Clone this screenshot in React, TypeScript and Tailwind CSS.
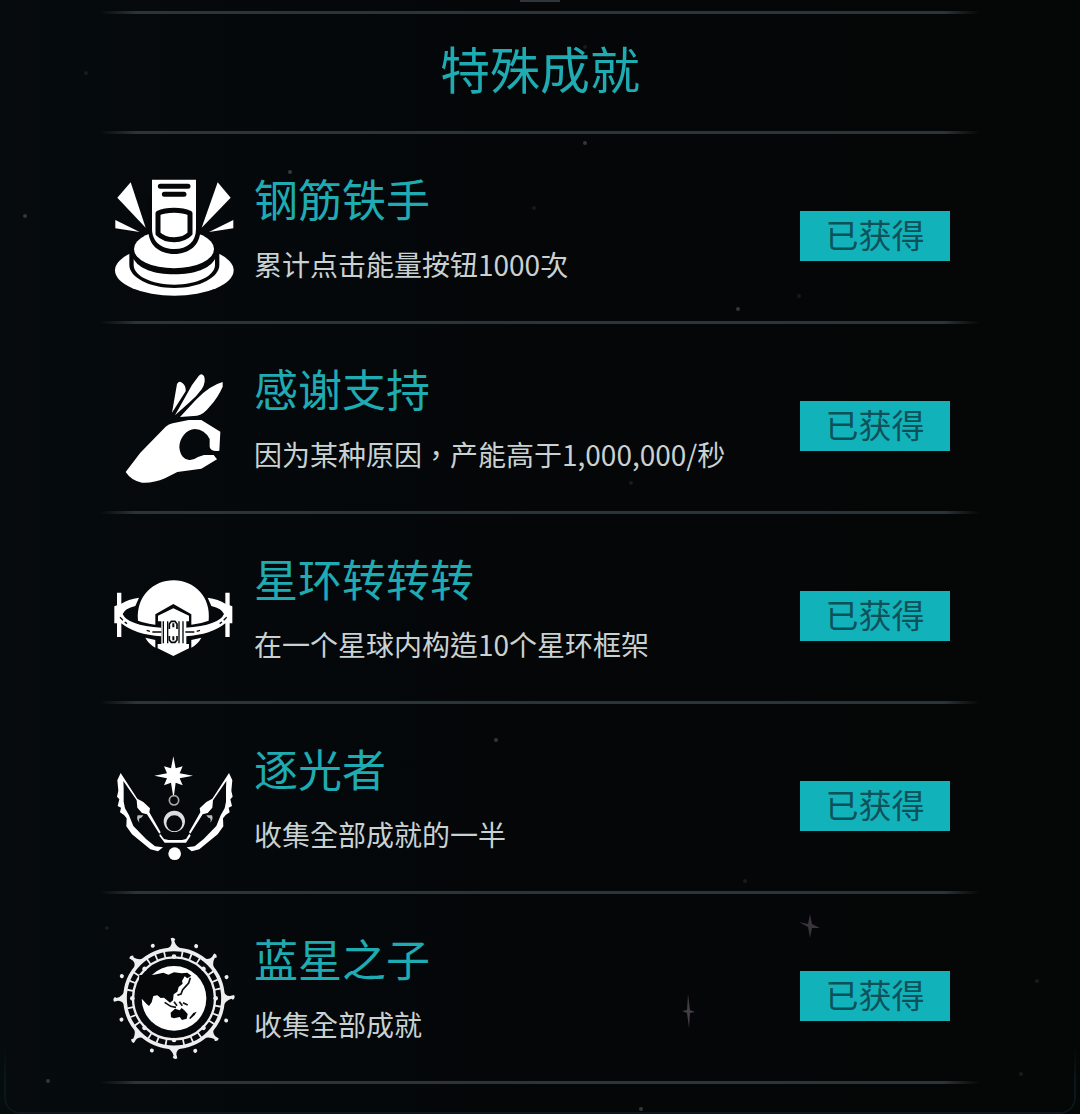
import type { ReactNode } from 'react';

const SPOKES = [0, 45, 90, 135, 180, 225, 270, 315];

function PressIcon() {
  return (
    <svg viewBox="42 33 360 360" className="size-[120px] shrink-0 overflow-visible" aria-hidden="true">
      <g fill="#fff">
        <ellipse cx="223" cy="316" rx="178" ry="76" />
        <path d="M88 240H358V300C358 336 300 369 223 369S88 336 88 300Z" fill="#050709" />
        <path d="M101 282C116 310 160 328 223 328S330 310 345 282V300C345 332 292 359 223 359S101 332 101 300Z" />
        <ellipse cx="222" cy="252" rx="120" ry="58" />
        <path d="M143 100H301V195C301 240 268 267 223 267S145 240 145 195Z" fill="#050709" />
        <path d="M156 44H288V192C288 230 262 252 223 252S156 230 156 192Z" />
        <path d="M92 52L52 98L137 188Z" />
        <path d="M353 52L392 98L305 188Z" />
        <path d="M46 165L119 201L46 190Z" />
        <path d="M400 165L327 201L400 190Z" />
      </g>
      <g fill="none" stroke="#050709" strokeLinecap="round" strokeLinejoin="round">
        <path d="M181 64H264M193 88H252" strokeWidth="15" />
        <path d="M174 145C200 133 244 133 270 145V206C248 230 198 230 174 206Z" strokeWidth="15" />
      </g>
    </svg>
  );
}

function HandIcon() {
  return (
    <svg viewBox="42 18 360 360" className="size-[120px] shrink-0 overflow-visible" aria-hidden="true">
      <g fill="#fff">
        <path d="M216 158L231 72Q238 60 248 70Q258 78 257 94Z" />
        <path d="M225 166L276 75L296 48Q304 37 312 48Q319 66 305 88Q290 110 267 128Z" />
        <path d="M240 171L288 119Q330 76 368 66V80Q354 112 330 139Q310 165 291 167Z" />
        <path d="M77 336L121 278L197 200Q206 193 218 190L266 180H304L361 215L358 272Q333 276 329 261V237Q314 208 285 207C258 208 238 235 238 262C240 286 252 299 268 300Q280 301 294 291L312 285H341L351 298L304 326L232 336L195 355Q160 370 126 368Q94 362 77 336Z" />
      </g>
    </svg>
  );
}

function StationArm() {
  return (
    <>
      <path d="M51 98H64V131Q84 118 117 113L106 138Q74 146 68 162Q82 196 184 203V229Q105 224 64 190V231H51V190H43V139L51 136Z" fill="#fff" />
      <path d="M136 233L166 240V263Q146 252 136 233Z" fill="#fff" />
      <path d="M157 216H184M140 211L150 214M60 172L69 181M74 186L81 191" fill="none" stroke="#08090c" strokeWidth="4" />
    </>
  );
}

function StationIcon() {
  return (
    <svg viewBox="42 -12 360 360" className="size-[120px] shrink-0 overflow-visible" aria-hidden="true">
      <g fill="#fff">
        <path d="M114 182C108 108 160 61 221 61S334 110 326 182Q300 192 274 194V163L220 132L166 163V194Q135 190 114 182Z" />
        <path d="M174 167L220 145L267 167V184H259V252H267V265L220 288L173 265V252H184V184H174Z" />
      </g>
      <StationArm />
      <g transform="translate(440 0) scale(-1 1)">
        <StationArm />
      </g>
      <g fill="none" stroke="#08090c">
        <path d="M190 184V250M203 184V250M237 184V250M249 184V250" strokeWidth="4" />
        <path d="M208 207V192L214 184H225L231 192V207M208 228V240L214 247H225L231 240V228" strokeWidth="5" />
        <path d="M220 190V202M220 229V241" strokeWidth="6" />
      </g>
    </svg>
  );
}

function Wing() {
  return (
    <>
      <path
        d="M62 84L52 106L55 137L51 155L58 163L53 183L63 188L60 202L72 210L80 220L79 244L96 268L151 313L174 319L189 307L165 304L138 282L100 243L87 211L75 190L71 170V130L70 108L110 166L112 188L126 204L141 208L178 266L182 262L148 202L150 190L130 171L112 161Z"
        fill="#fff"
      />
      <path d="M113 211H130L124 218Q114 218 118 233Q108 223 113 211Z" fill="#bbb" />
    </>
  );
}

function WingsIcon() {
  return (
    <svg viewBox="42 3 360 360" className="size-[120px] shrink-0 overflow-visible" aria-hidden="true">
      <Wing />
      <g transform="translate(449 0) scale(-1 1)">
        <Wing />
      </g>
      <g fill="#fff">
        <path d="M220 34L227 70L248 64L239 85L279 92L239 100L248 121L227 113L222 151H219L213 113L192 121L201 100L163 92L201 85L192 64L213 70Z" />
        <circle cx="224" cy="326" r="19" />
        <path d="M180 266L192 282L206 285H246L258 282L268 266L272 272L258 293H194L178 272Z" />
      </g>
      <circle cx="222" cy="166" r="14" fill="none" stroke="#aaa" strokeWidth="5" />
      <path fillRule="evenodd" d="M191 229A32 32 0 1 1 255 229A32 32 0 1 1 191 229ZM199 235A24 24 0 1 0 247 235A24 24 0 1 0 199 235Z" fill="#ddd" />
    </svg>
  );
}

function EarthIcon() {
  return (
    <svg viewBox="42 33 360 360" className="size-[120px] shrink-0 overflow-visible" aria-hidden="true">
      <g fill="none" stroke="#eee">
        <circle cx="222" cy="220" r="147" strokeWidth="11" />
        <circle cx="222" cy="220" r="123" strokeWidth="7" />
        <circle cx="222" cy="220" r="134" strokeWidth="18" pathLength="160" strokeDasharray="1 4 1 4 1 9" strokeDashoffset="-4" />
      </g>
      <g fill="#eee">
        {SPOKES.map((angle) => (
          <g key={angle} transform={`rotate(${angle} 222 220)`}>
            <path d="M196 74Q216 66 215 52L212 40Q220 35 226 43L223 48Q228 66 248 74Z" />
            <circle cx="222" cy="95" r="7" />
            <circle cx="222" cy="50" r="6" transform="rotate(23 222 220)" />
          </g>
        ))}
      </g>
      <circle cx="222" cy="220" r="97" fill="#fff" />
      <g fill="#050709">
        <path d="M118 150L162 149L190 143L205 149L222 142L245 145L262 143L274 152L262 160L254 154L246 168L248 176L236 186L232 200L221 208L219 226L210 233L201 226L192 218L182 219L172 211L160 213L155 232L147 243L139 236L126 222L112 224Z" />
        <path d="M212 263L225 251L239 256L245 249L253 256L263 267L260 281L246 285L239 276L222 280L213 277Z" />
        <path d="M268 279L280 264L290 260L284 270L270 283Z" />
      </g>
      <path
        d="M271 158L266 174L257 184L248 194L243 207L232 211M194 232L212 244L228 247M222 230L231 242M238 230L247 242M249 233L263 240"
        fill="none"
        stroke="#111"
        strokeWidth="5"
      />
    </svg>
  );
}

function Rule() {
  return (
    <div className="flex h-[3px]" role="presentation">
      <div className="w-9 bg-linear-to-r from-transparent to-[#2b3439]" />
      <div className="flex-1 bg-[#2b3439]" />
      <div className="w-9 bg-linear-to-l from-transparent to-[#2b3439]" />
    </div>
  );
}

interface Achievement {
  title: string;
  description: string;
  icon: ReactNode;
}

const achievements: Achievement[] = [
  { title: '钢筋铁手', description: '累计点击能量按钮1000次', icon: <PressIcon /> },
  { title: '感谢支持', description: '因为某种原因，产能高于1,000,000/秒', icon: <HandIcon /> },
  { title: '星环转转转', description: '在一个星球内构造10个星环框架', icon: <StationIcon /> },
  { title: '逐光者', description: '收集全部成就的一半', icon: <WingsIcon /> },
  { title: '蓝星之子', description: '收集全部成就', icon: <EarthIcon /> },
];

function AchievementRow({ title, description, icon }: Achievement) {
  return (
    <li>
      <div className="flex h-[187px] items-center gap-5 pt-4 pr-[30px] pl-[14px]">
        {icon}
        <div className="flex flex-1 flex-col gap-4 pb-5 whitespace-nowrap">
          <h2 className="text-[44px] leading-[60px] text-[#1fabb2]">{title}</h2>
          <p className="font-['Noto_Sans_CJK_TC','Noto_Sans_CJK_SC',sans-serif] text-[28px] leading-[40px] text-[#c9d1d1]">
            {description}
          </p>
        </div>
        <button type="button" className="h-[50px] w-[150px] shrink-0 bg-[#12b2ba] pb-1 text-[33px] leading-[46px] text-[#0e5159]">
          已获得
        </button>
      </div>
      <Rule />
    </li>
  );
}

// Faint stars scattered behind the list
function Starfield() {
  return (
    <svg className="pointer-events-none absolute inset-0 size-full" aria-hidden="true">
      <g fill="#38363a">
        <circle cx="585" cy="143" r="2" />
        <circle cx="290" cy="172" r="2" />
        <circle cx="738" cy="309" r="2" />
        <circle cx="25" cy="216" r="2" />
        <circle cx="496" cy="740" r="2" />
        <circle cx="641" cy="1109" r="2" />
        <circle cx="48" cy="1081" r="2" />
      </g>
      <g fill="#191b1e">
        <circle cx="799" cy="296" r="2" />
        <circle cx="534" cy="208" r="2" />
        <circle cx="86" cy="73" r="2" />
        <circle cx="631" cy="483" r="2" />
        <circle cx="745" cy="881" r="2" />
        <circle cx="107" cy="928" r="2" />
        <circle cx="1037" cy="981" r="2" />
        <circle cx="1021" cy="1074" r="2" />
        <circle cx="585" cy="47" r="2" />
      </g>
      <path d="M810 914L812 924L820 928L812 928L810 938L808 927L799 922L808 924Z" fill="#3b343a" />
      <path d="M688 994L690 1010L695 1012L690 1013L689 1028L687 1013L682 1011L687 1010Z" fill="#453d44" />
    </svg>
  );
}

export default function App() {
  return (
    <main className="relative min-h-screen overflow-hidden bg-[#040608] bg-linear-to-r from-[#060b0e] via-[#040608] to-[#050606] px-[100px] pt-[11px] font-['Noto_Sans_CJK_SC',sans-serif]">
      <Starfield />
      <div className="pointer-events-none absolute inset-x-1 bottom-0 h-[70px] rounded-b-2xl border-2 border-t-0 border-[#08181b] mask-t-from-50%" />
      <div className="absolute top-0 left-1/2 h-[2px] w-10 -translate-x-1/2 bg-[#30363a]" />
      <div className="relative">
        <Rule />
        <h1 className="flex h-[117px] items-center justify-center pb-3 text-[50px] leading-[60px] text-[#1fabb2]">特殊成就</h1>
        <Rule />
        <ul>
          {achievements.map((item) => (
            <AchievementRow key={item.title} {...item} />
          ))}
        </ul>
      </div>
    </main>
  );
}
